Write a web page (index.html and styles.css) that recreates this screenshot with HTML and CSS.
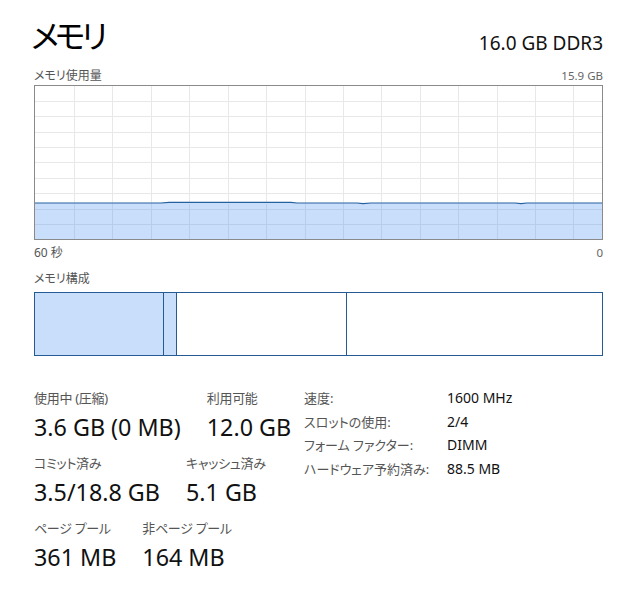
FILE: index.html
```html
<!DOCTYPE html>
<html lang="ja">
<head>
<meta charset="utf-8">
<link rel="stylesheet" href="styles.css">
</head>
<body>
<div class="panel">
  <div class="header">
    <div class="title">メモリ</div>
    <div class="spec">16.0 GB DDR3</div>
  </div>
  <div class="row-caption">
    <span>メモリ使用量</span>
    <span class="num">15.9 GB</span>
  </div>
  <div class="graph">
    <svg width="567" height="153" viewBox="0 0 567 153">
      <g class="grid">
        <line x1="39.5" y1="0" x2="39.5" y2="153"/>
        <line x1="77.5" y1="0" x2="77.5" y2="153"/>
        <line x1="116.5" y1="0" x2="116.5" y2="153"/>
        <line x1="154.5" y1="0" x2="154.5" y2="153"/>
        <line x1="193.5" y1="0" x2="193.5" y2="153"/>
        <line x1="231.5" y1="0" x2="231.5" y2="153"/>
        <line x1="270.5" y1="0" x2="270.5" y2="153"/>
        <line x1="308.5" y1="0" x2="308.5" y2="153"/>
        <line x1="346.5" y1="0" x2="346.5" y2="153"/>
        <line x1="385.5" y1="0" x2="385.5" y2="153"/>
        <line x1="423.5" y1="0" x2="423.5" y2="153"/>
        <line x1="462.5" y1="0" x2="462.5" y2="153"/>
        <line x1="500.5" y1="0" x2="500.5" y2="153"/>
        <line x1="538.5" y1="0" x2="538.5" y2="153"/>
        <line x1="0" y1="15.5" x2="567" y2="15.5"/>
        <line x1="0" y1="30.5" x2="567" y2="30.5"/>
        <line x1="0" y1="46.5" x2="567" y2="46.5"/>
        <line x1="0" y1="61.5" x2="567" y2="61.5"/>
        <line x1="0" y1="76.5" x2="567" y2="76.5"/>
        <line x1="0" y1="92.5" x2="567" y2="92.5"/>
        <line x1="0" y1="107.5" x2="567" y2="107.5"/>
        <line x1="0" y1="123.5" x2="567" y2="123.5"/>
        <line x1="0" y1="138.5" x2="567" y2="138.5"/>
      </g>
      <path class="area" d="M0 117 L126 117 L134 116.3 L256 116.3 L262 117 L322 117 L328 117.6 L336 117 L480 117 L486 117.6 L492 117 L567 117 L567 153 L0 153 Z"/>
      <g class="grid-in">
        <line x1="39.5" y1="118" x2="39.5" y2="153"/>
        <line x1="77.5" y1="118" x2="77.5" y2="153"/>
        <line x1="116.5" y1="118" x2="116.5" y2="153"/>
        <line x1="154.5" y1="118" x2="154.5" y2="153"/>
        <line x1="193.5" y1="118" x2="193.5" y2="153"/>
        <line x1="231.5" y1="118" x2="231.5" y2="153"/>
        <line x1="270.5" y1="118" x2="270.5" y2="153"/>
        <line x1="308.5" y1="118" x2="308.5" y2="153"/>
        <line x1="346.5" y1="118" x2="346.5" y2="153"/>
        <line x1="385.5" y1="118" x2="385.5" y2="153"/>
        <line x1="423.5" y1="118" x2="423.5" y2="153"/>
        <line x1="462.5" y1="118" x2="462.5" y2="153"/>
        <line x1="500.5" y1="118" x2="500.5" y2="153"/>
        <line x1="538.5" y1="118" x2="538.5" y2="153"/>
        <line x1="0" y1="123.5" x2="567" y2="123.5"/>
        <line x1="0" y1="138.5" x2="567" y2="138.5"/>
      </g>
      <path class="line" d="M0 117 L126 117 L134 116.3 L256 116.3 L262 117 L322 117 L328 117.6 L336 117 L480 117 L486 117.6 L492 117 L567 117"/>
    </svg>
  </div>
  <div class="axis">
    <span>60 秒</span>
    <span class="num">0</span>
  </div>
  <div class="section-caption">メモリ構成</div>
  <div class="composition">
    <div class="seg seg-used"></div>
    <div class="seg seg-modified"></div>
    <div class="seg seg-standby"></div>
    <div class="seg seg-free"></div>
  </div>
  <div class="stats">
    <div class="stats-main">
      <div class="stat-row">
        <div class="stat"><div class="label">使用中 (圧縮)</div><div class="value">3.6 GB (0 MB)</div></div>
        <div class="stat"><div class="label">利用可能</div><div class="value">12.0 GB</div></div>
      </div>
      <div class="stat-row">
        <div class="stat"><div class="label">コミット済み</div><div class="value">3.5/18.8 GB</div></div>
        <div class="stat"><div class="label">キャッシュ済み</div><div class="value">5.1 GB</div></div>
      </div>
      <div class="stat-row">
        <div class="stat"><div class="label">ページ プール</div><div class="value">361 MB</div></div>
        <div class="stat"><div class="label">非ページ プール</div><div class="value">164 MB</div></div>
      </div>
    </div>
    <div class="props">
      <div class="prop-label">速度:</div><div class="prop-value">1600 MHz</div>
      <div class="prop-label">スロットの使用:</div><div class="prop-value">2/4</div>
      <div class="prop-label">フォーム ファクター:</div><div class="prop-value">DIMM</div>
      <div class="prop-label">ハードウェア予約済み:</div><div class="prop-value">88.5 MB</div>
    </div>
  </div>
</div>
</body>
</html>
```

FILE: styles.css
```css
html, body {
  margin: 0;
  padding: 0;
  background: #ffffff;
}

body {
  font-family: "Noto Sans", "Noto Sans CJK JP", sans-serif;
  color: #1a1a1a;
  font-feature-settings: "palt";
}

.panel {
  width: 569px;
  padding: 14px 0 0 34px;
}

.header {
  display: flex;
  justify-content: space-between;
  align-items: flex-start;
  height: 52px;
}

.title {
  font-family: "Noto Sans CJK JP", sans-serif;
  font-size: 32px;
  line-height: 40px;
  color: #000;
  letter-spacing: -4px;
  margin-left: -3px;
}

.spec {
  font-size: 19px;
  line-height: 24px;
  color: #111;
  margin-top: 17px;
}

.row-caption,
.axis {
  display: flex;
  justify-content: space-between;
  font-family: "Noto Sans", "Noto Sans CJK JP", sans-serif;
  font-size: 12px;
  color: #555;
}

.row-caption {
  line-height: 18px;
  margin-top: 1px;
}

.num {
  font-size: 11.5px;
  color: #666;
}

.axis {
  line-height: 16px;
  margin-top: 5px;
}

.graph {
  border: 1px solid #8a8a8a;
  height: 153px;
  width: 567px;
}

.graph svg {
  display: block;
}

.grid line {
  stroke: #e8e8e8;
  stroke-width: 1;
}

.grid-in line {
  stroke: #b7cde9;
  stroke-width: 1;
}

.area {
  fill: #c8defa;
}

.line {
  fill: none;
  stroke: #25609f;
  stroke-width: 1.2;
}

.section-caption {
  font-size: 12px;
  line-height: 18px;
  color: #555;
  margin-top: 9px;
  margin-bottom: 4px;
}

.composition {
  display: flex;
  width: 567px;
  height: 62px;
  border: 1px solid #245b95;
}

.seg {
  height: 100%;
  box-sizing: border-box;
}

.seg + .seg {
  border-left: 1px solid #245b95;
}

.seg-used {
  width: 128px;
  background: #c8defa;
}

.seg-modified {
  width: 13px;
  background: #c8defa;
}

.seg-standby {
  width: 170px;
  background: #ffffff;
}

.seg-free {
  flex: 1;
  background: #ffffff;
}

.stats {
  display: flex;
  margin-top: 32px;
}

.stats-main {
  width: 270px;
  display: flex;
  flex-direction: column;
  gap: 9px;
}

.stat-row {
  display: flex;
  gap: 26px;
}

.label {
  font-size: 13px;
  line-height: 20px;
  letter-spacing: -0.3px;
  color: #555;
  white-space: nowrap;
}

.value {
  font-size: 23.3px;
  line-height: 33px;
  margin-top: 3px;
  color: #111;
  white-space: nowrap;
}

.props {
  display: grid;
  grid-template-columns: 143px auto;
  grid-auto-rows: 23.5px;
  align-content: start;
  font-size: 13px;
  line-height: 20px;
}

.prop-label {
  color: #555;
  white-space: nowrap;
}

.prop-value {
  color: #111;
  font-size: 14px;
}
```
